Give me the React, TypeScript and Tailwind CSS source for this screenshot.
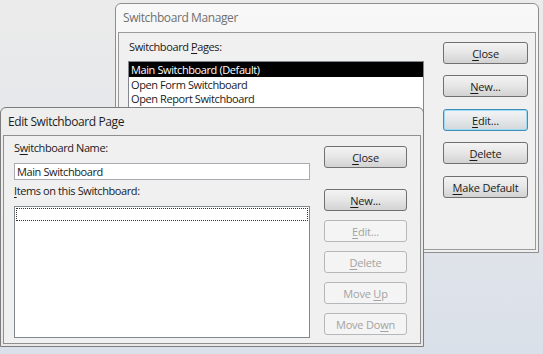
import React from 'react';

const font = { fontFamily: '"Open Sans", "Noto Sans", sans-serif' };

type BtnProps = {
  label: React.ReactNode;
  disabled?: boolean;
  focused?: boolean;
  className?: string;
};

const Btn: React.FC<BtnProps> = ({ label, disabled, focused, className = '' }) => {
  let look =
    'border-[#707070] bg-gradient-to-b from-[#f3f3f3] via-[#e6e6e6] to-[#d2d2d2] text-[#1a1a1a]';
  if (disabled) look = 'border-[#b5b8ba] bg-[#f4f4f4] text-[#a3a3a3]';
  if (focused)
    look =
      'border-[#3c8fb8] bg-gradient-to-b from-[#f2f4f5] via-[#e5e8ea] to-[#d3d7da] text-[#1a1a1a] shadow-[inset_0_0_0_1px_#9fdcf3]';
  return (
    <div
      className={`h-[22px] w-full rounded-[3px] border flex items-center justify-center text-[11px] leading-none tracking-[-0.2px] ${look} ${className}`}
    >
      <span>{label}</span>
    </div>
  );
};

const U: React.FC<{ children: React.ReactNode }> = ({ children }) => (
  <span className="underline underline-offset-2">{children}</span>
);

export default function App() {
  return (
    <div
      className="relative w-[543px] h-[354px] overflow-hidden bg-gradient-to-b from-[#ebebeb] via-[#e4e6ea] to-[#dae0e9] tracking-[-0.4px]"
      style={font}
    >
      {/* Switchboard Manager (inactive) */}
      <div className="absolute left-[115px] top-[3px] w-[424px] h-[250px] rounded-t-[6px] border border-[#8e8e8e] bg-gradient-to-b from-[#f8f8f8] to-[#efefef] flex flex-col">
        <div className="h-[28px] pl-[7px] flex items-center text-[12px] text-[#707070]">Switchboard Manager</div>
        <div className="flex-1 mx-[2px] mb-[2px] border border-[#9a9a9a] bg-[#f0f0f0] flex pl-[9px] pt-[8px] pr-[7px]">
          <div className="w-[296px] flex flex-col">
            <div className="h-[13px] mt-[-1px] pl-[1px] text-[11px] leading-[13px] text-[#1a1a1a]">
              Switchboard <U>P</U>ages:
            </div>
            <div className="mt-[8px] h-[180px] border border-[#828790] bg-white text-[11px] leading-[15px] text-[#1a1a1a]">
              <div className="h-[15px] pl-[2px] bg-black text-white">Main Switchboard (Default)</div>
              <div className="h-[14px] pl-[2px]">Open Form Switchboard</div>
              <div className="h-[14px] pl-[2px]">Open Report Switchboard</div>
            </div>
          </div>
          <div className="ml-auto w-[85px] flex flex-col pt-[1px]">
            <Btn label={<><U>C</U>lose</>} />
            <Btn className="mt-[11px]" label={<><U>N</U>ew...</>} />
            <Btn className="mt-[12px]" focused label={<><U>E</U>dit...</>} />
            <Btn className="mt-[11px]" label={<><U>D</U>elete</>} />
            <Btn className="mt-[12px]" label={<><U>M</U>ake Default</>} />
          </div>
        </div>
      </div>

      {/* Edit Switchboard Page (active) */}
      <div className="absolute left-0 top-[107px] w-[424px] h-[240px] rounded-t-[6px] border border-[#7d7d7d] bg-gradient-to-b from-[#eeeeee] to-[#e8e8e8] flex flex-col">
        <div className="h-[27px] pl-[7px] flex items-center text-[12px] text-[#1e1e1e]">Edit Switchboard Page</div>
        <div className="flex-1 mx-[2px] mb-[2px] border border-[#8f8f8f] bg-[#f0f0f0] flex pl-[10px] pt-[5px]">
          <div className="w-[296px] flex flex-col">
            <div className="h-[13px] text-[11px] leading-[13px] text-[#1a1a1a]">
              S<U>w</U>itchboard Name:
            </div>
            <div className="mt-[9px] h-[17px] border border-[#a9abb0] bg-white pl-[2px] text-[11px] leading-[15px] text-[#1a1a1a]">
              Main Switchboard
            </div>
            <div className="mt-[4px] h-[13px] text-[11px] leading-[13px] text-[#1a1a1a]">
              <U>I</U>tems on this Switchboard:
            </div>
            <div className="mt-[9px] h-[132px] border border-[#828790] bg-white p-[1px]">
              <div className="h-[13px] border border-dotted border-[#333]" />
            </div>
          </div>
          <div className="ml-[14px] w-[83px] flex flex-col pt-[5px]">
            <Btn label={<><U>C</U>lose</>} />
            <Btn className="mt-[21px]" label={<><U>N</U>ew...</>} />
            <Btn className="mt-[9px]" disabled label={<><U>E</U>dit...</>} />
            <Btn className="mt-[9px]" disabled label={<><U>D</U>elete</>} />
            <Btn className="mt-[9px]" disabled label={<>Move <U>U</U>p</>} />
            <Btn className="mt-[9px]" disabled label={<>Move Do<U>w</U>n</>} />
          </div>
        </div>
      </div>
    </div>
  );
}
